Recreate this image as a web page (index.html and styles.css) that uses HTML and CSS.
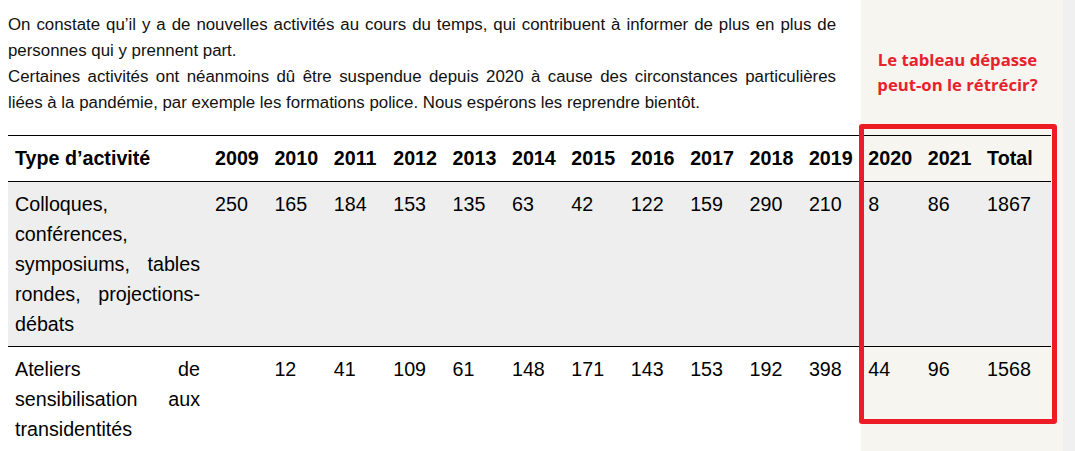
FILE: index.html
```html
<!DOCTYPE html>
<html lang="fr">
<head>
<meta charset="utf-8">
<title>Activités</title>
<link rel="stylesheet" href="styles.css">
</head>
<body>
<div class="page">
  <main class="main">
    <div class="intro">
      <p>On constate qu’il y a de nouvelles activités au cours du temps, qui contribuent à informer de plus en plus de personnes qui y prennent part.</p>
      <p>Certaines activités ont néanmoins dû être suspendue depuis 2020 à cause des circonstances particulières liées à la pandémie, par exemple les formations police. Nous espérons les reprendre bientôt.</p>
    </div>
    <table class="activities">
      <colgroup>
        <col class="c-type">
        <col class="c-year"><col class="c-year"><col class="c-year"><col class="c-year"><col class="c-year">
        <col class="c-year"><col class="c-year"><col class="c-year"><col class="c-year"><col class="c-year">
        <col class="c-year"><col class="c-year"><col class="c-year">
        <col class="c-total">
      </colgroup>
      <thead>
        <tr>
          <th>Type d’activité</th>
          <th>2009</th><th>2010</th><th>2011</th><th>2012</th><th>2013</th><th>2014</th><th>2015</th>
          <th>2016</th><th>2017</th><th>2018</th><th>2019</th><th>2020</th><th>2021</th><th>Total</th>
        </tr>
      </thead>
      <tbody>
        <tr class="shaded">
          <td class="type">Colloques, conférences, symposiums, tables rondes, projections-débats</td>
          <td>250</td><td>165</td><td>184</td><td>153</td><td>135</td><td>63</td><td>42</td>
          <td>122</td><td>159</td><td>290</td><td>210</td><td>8</td><td>86</td><td>1867</td>
        </tr>
        <tr>
          <td class="type">Ateliers de sensibilisation aux transidentités</td>
          <td></td><td>12</td><td>41</td><td>109</td><td>61</td><td>148</td><td>171</td>
          <td>143</td><td>153</td><td>192</td><td>398</td><td>44</td><td>96</td><td>1568</td>
        </tr>
      </tbody>
    </table>
  </main>
  <aside class="sidebar">
    <p class="note">Le tableau dépasse<br>peut-on le rétrécir?</p>
  </aside>
  <div class="edge"></div>
  <div class="highlight"></div>
</div>
</body>
</html>
```
FILE: styles.css
```css
html, body {
  margin: 0;
  padding: 0;
  background: #ffffff;
}

.page {
  position: relative;
  display: grid;
  grid-template-columns: 861px 202px 1fr;
  min-height: 451px;
  overflow: hidden;
}

.main {
  position: relative;
  z-index: 1;
  padding: 12px 0 0 8px;
  min-width: 0;
}

.intro {
  width: 828px;
  font-family: "Liberation Sans", Arial, sans-serif;
  font-size: 16.85px;
  line-height: 26px;
  color: #111111;
  text-align: justify;
}

.intro p {
  margin: 0;
}

.activities {
  margin-top: 19px;
  width: 1043px;
  table-layout: fixed;
  border-collapse: separate;
  border-spacing: 0;
  font-family: "Liberation Sans", Arial, sans-serif;
  font-size: 19.7px;
  line-height: 30px;
  color: #000000;
}

.c-type { width: 200px; }
.c-year { width: 59.4px; }
.c-total { width: 70.8px; }

.activities th,
.activities td {
  padding: 7px 8px 7px 7px;
  text-align: left;
  vertical-align: top;
}

.activities th {
  font-weight: bold;
  border-top: 1px solid #000000;
  border-bottom: 1px solid #000000;
  padding-bottom: 8px;
  white-space: nowrap;
}

.activities tr.shaded td {
  background: #eeeeee;
  border-bottom: 1px solid #000000;
}

.activities td.type {
  text-align: justify;
}

.sidebar {
  background: #f6f5f0;
  padding: 47px 9px 0 0;
}

.note {
  margin: 0;
  text-align: center;
  font-family: "Open Sans", "Noto Sans", sans-serif;
  font-weight: bold;
  font-size: 16.7px;
  line-height: 25px;
  color: #e8222c;
}

.edge {
  background: #f0f0f0;
}

.highlight {
  position: absolute;
  left: 859px;
  top: 124px;
  width: 198px;
  height: 300px;
  box-sizing: border-box;
  border: 5px solid #ed1c24;
  border-radius: 3px;
  z-index: 2;
}
```
